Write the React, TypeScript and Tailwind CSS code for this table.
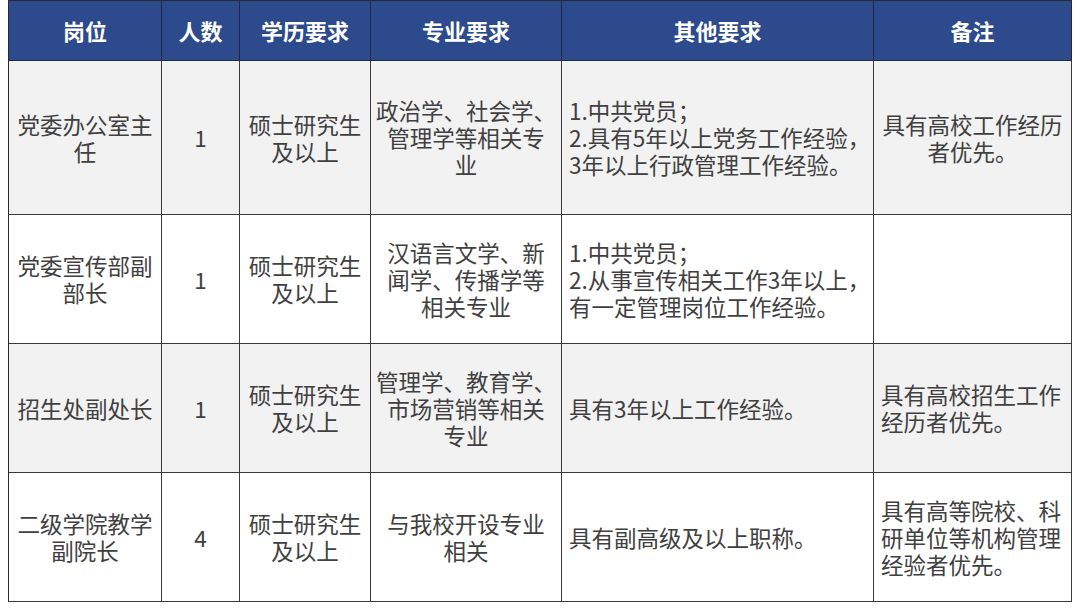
import React from "react";

const HEADERS = ["岗位", "人数", "学历要求", "专业要求", "其他要求", "备注"];

type Cell = { lines: string[]; align?: "center" | "left" };

const ROWS: { bg: string; h: string; cells: Cell[] }[] = [
  {
    bg: "bg-[#f2f2f2]",
    h: "h-[154px]",
    cells: [
      { lines: ["党委办公室主", "任"] },
      { lines: ["1"] },
      { lines: ["硕士研究生", "及以上"] },
      { lines: ["政治学、社会学、", "管理学等相关专", "业"] },
      { lines: ["1.中共党员；", "2.具有5年以上党务工作经验，", "3年以上行政管理工作经验。"], align: "left" },
      { lines: ["具有高校工作经历", "者优先。"] },
    ],
  },
  {
    bg: "bg-white",
    h: "h-[129px]",
    cells: [
      { lines: ["党委宣传部副", "部长"] },
      { lines: ["1"] },
      { lines: ["硕士研究生", "及以上"] },
      { lines: ["汉语言文学、新", "闻学、传播学等", "相关专业"] },
      { lines: ["1.中共党员；", "2.从事宣传相关工作3年以上，", "有一定管理岗位工作经验。"], align: "left" },
      { lines: [] },
    ],
  },
  {
    bg: "bg-[#f2f2f2]",
    h: "h-[129px]",
    cells: [
      { lines: ["招生处副处长"] },
      { lines: ["1"] },
      { lines: ["硕士研究生", "及以上"] },
      { lines: ["管理学、教育学、", "市场营销等相关", "专业"] },
      { lines: ["具有3年以上工作经验。"], align: "left" },
      { lines: ["具有高校招生工作", "经历者优先。"], align: "left" },
    ],
  },
  {
    bg: "bg-white",
    h: "h-[129px]",
    cells: [
      { lines: ["二级学院教学", "副院长"] },
      { lines: ["4"] },
      { lines: ["硕士研究生", "及以上"] },
      { lines: ["与我校开设专业", "相关"] },
      { lines: ["具有副高级及以上职称。"], align: "left" },
      { lines: ["具有高等院校、科", "研单位等机构管理", "经验者优先。"], align: "left" },
    ],
  },
];

export default function App() {
  return (
    <div
      className="w-[1080px] h-[608px] bg-white pl-[8px] overflow-hidden"
      style={{ fontFamily: '"Noto Sans CJK SC", "Noto Sans", sans-serif' }}
    >
      <div className="grid grid-cols-[153px_78px_131px_191px_312px_198px] w-fit border-l border-t border-[#2a2a2a]">
        {HEADERS.map((h) => (
          <div
            key={h}
            className="h-[60px] bg-[#2c4a8c] border-r border-b border-[#1e2a44] flex items-center justify-center text-white text-[22px] font-bold"
          >
            {h}
          </div>
        ))}
        {ROWS.map((row, ri) =>
          row.cells.map((cell, ci) => (
            <div
              key={`${ri}-${ci}`}
              className={`${row.h} ${row.bg} border-r border-b border-[#3a3a3a] flex items-center text-[22.5px] leading-[27px] text-[#404040] ${
                cell.align === "left" ? "justify-start pl-[7px] text-left" : "justify-center text-center"
              }`}
            >
              <div className="whitespace-nowrap">
                {cell.lines.map((l, li) => (
                  <div key={li}>{l}</div>
                ))}
              </div>
            </div>
          )),
        )}
      </div>
    </div>
  );
}
